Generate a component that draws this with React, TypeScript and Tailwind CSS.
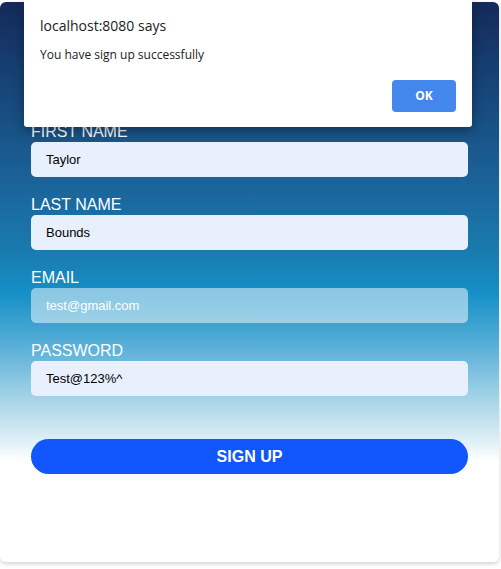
import { useState } from "react";

const fields = [
  { label: "FIRST NAME", value: "Taylor", type: "text" },
  { label: "LAST NAME", value: "Bounds", type: "text" },
  { label: "EMAIL", value: "test@gmail.com", type: "email" },
  { label: "PASSWORD", value: "Test@123%^", type: "text" },
];

function Field({ label, value, type }: { label: string; value: string; type: string }) {
  const [v, setV] = useState(value);
  const faded = type === "email";
  return (
    <div className="flex flex-col">
      <label className="text-[16px] leading-[20px] text-white font-['Liberation_Sans',Arial,sans-serif]">
        {label}
      </label>
      <input
        value={v}
        onChange={(e) => setV(e.target.value)}
        className={
          faded
            ? "h-[35px] w-full rounded-[5px] bg-white/50 pl-[15px] text-[13px] text-white outline-none font-['Liberation_Sans',Arial,sans-serif]"
            : "h-[35px] w-full rounded-[5px] bg-[#e8f0fe] pl-[15px] text-[13px] text-black outline-none font-['Liberation_Sans',Arial,sans-serif]"
        }
      />
    </div>
  );
}

export default function App() {
  return (
    <div className="relative h-[569px] w-[501px] overflow-hidden bg-white">
      <div className="mt-[2px] flex h-[560px] w-[499px] flex-col rounded-md bg-[linear-gradient(180deg,#142a5a_0%,#1a5f95_30%,#1a7cb0_45%,#1590c7_52%,#5db1d9_62%,#a6d4e8_71%,#e4f2f8_79%,#ffffff_82%,#ffffff_100%)] px-[31px] pt-[120px] shadow-[0_2px_4px_rgba(0,0,0,0.18)]">
        <div className="flex flex-col gap-[18px]">
          {fields.map((f) => (
            <Field key={f.label} {...f} />
          ))}
        </div>
        <button className="mt-[43px] h-[35px] w-full rounded-full bg-[#1157fd] text-[16px] font-bold text-white font-['Liberation_Sans',Arial,sans-serif]">
          SIGN UP
        </button>
      </div>

      {/* browser alert overlay */}
      <div className="absolute left-[24px] top-0 flex h-[127px] w-[448px] flex-col rounded-b-[3px] bg-white px-[16px] pt-[16px] shadow-[0_4px_12px_rgba(0,0,0,0.35)] font-['Open_Sans','Noto_Sans',sans-serif]">
        <p className="text-[14px] leading-[20px] text-[#202124]">localhost:8080 says</p>
        <p className="mt-[11px] text-[12px] leading-[16px] text-[#202124]">You have sign up successfully</p>
        <div className="mt-auto mb-[15px] flex justify-end">
          <button className="h-[32px] w-[64px] rounded-[4px] bg-[#4487ec] text-[12px] font-bold text-white">
            OK
          </button>
        </div>
      </div>
    </div>
  );
}
